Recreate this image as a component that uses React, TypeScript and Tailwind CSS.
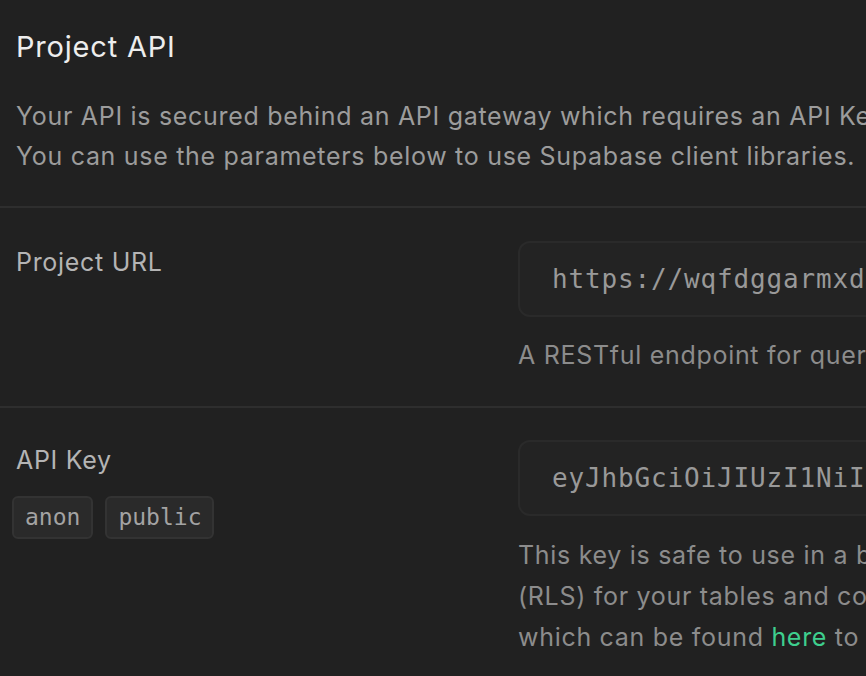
const sans = "font-['Inter','Noto_Sans',sans-serif]"
const mono = "font-['DejaVu_Sans_Mono','Liberation_Mono',monospace]"

const Field = ({ value }: { value: string }) => (
  <div className="flex h-[76px] w-[720px] items-center rounded-xl border-2 border-[#2a2a2a] bg-[#232323] px-8">
    <span className={`${mono} text-[26px] tracking-[0.85px] whitespace-nowrap text-[#999999]`}>{value}</span>
  </div>
)

const Badge = ({ children }: { children: string }) => (
  <span
    className={`${mono} flex h-[43px] items-center rounded-md border-2 border-[#333333] bg-[#2a2a2a] px-[11px] text-[23px] text-[#a3a3a3]`}
  >
    {children}
  </span>
)

export default function App() {
  return (
    <div className={`${sans} h-[676px] w-[866px] overflow-hidden bg-[#212121]`}>
      <div className="w-[1400px]">
        <header className="border-b-2 border-[#2e2e2e] px-4 pt-[27px] pb-[30px]">
          <h1 className="text-[29px] leading-[40px] tracking-[0.8px] text-[#ededed]">Project API</h1>
          <p className="mt-[29px] text-[25px] leading-[40px] tracking-[0.7px] text-[#9c9c9c]">
            Your API is secured behind an API gateway which requires an API Key for every request.
            <br />
            You can use the parameters below to use Supabase client libraries.
          </p>
        </header>

        <section className="flex border-b-2 border-[#2e2e2e] pt-[33px] pb-[31px]">
          <div className="w-[518px] shrink-0 pl-4">
            <p className="mt-[1px] text-[25px] leading-[40px] tracking-[0.7px] text-[#b4b4b4]">Project URL</p>
          </div>
          <div className="flex flex-col">
            <Field value="https://wqfdggarmxdbnhlxyzab.supabase.co" />
            <p className="mt-[18px] text-[25px] leading-[40px] tracking-[0.7px] whitespace-nowrap text-[#8c8c8c]">
              A RESTful endpoint for querying and managing your database.
            </p>
          </div>
        </section>

        <section className="flex pt-[32px]">
          <div className="w-[518px] shrink-0 pl-3">
            <p className="pl-1 text-[25px] leading-[40px] tracking-[0.7px] text-[#b4b4b4]">API Key</p>
            <div className="mt-[16px] flex gap-3">
              <Badge>anon</Badge>
              <Badge>public</Badge>
            </div>
          </div>
          <div className="flex flex-col">
            <Field value="eyJhbGciOiJIUzI1NiIsInR5cCI6IkpXVCJ9" />
            <p className="mt-[19px] text-[25px] leading-[41px] tracking-[0.7px] whitespace-nowrap text-[#8c8c8c]">
              This key is safe to use in a browser if you have enabled Row Level Security
              <br />
              (RLS) for your tables and configured policies. You may also use the service key
              <br />
              which can be found <span className="text-[#3ecf8e]">here</span> to bypass RLS.
            </p>
          </div>
        </section>
      </div>
    </div>
  )
}
